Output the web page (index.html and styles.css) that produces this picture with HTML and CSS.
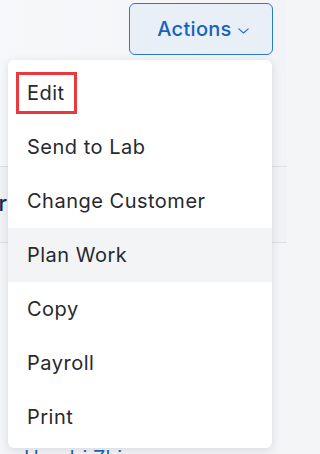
FILE: index.html
```html
<!DOCTYPE html>
<html lang="en">
<head>
<meta charset="utf-8">
<title>Actions menu</title>
<link rel="stylesheet" href="styles.css">
</head>
<body>
<div class="page">
  <header class="topbar">
    <button class="actions-btn" type="button">
      <span>Actions</span>
      <svg class="chev" width="11" height="6" viewBox="0 0 11 6" aria-hidden="true"><path d="M0.8 0.8 L5.5 5 L10.2 0.8" fill="none" stroke="#1f6fc5" stroke-width="1.1" stroke-linecap="round" stroke-linejoin="round"/></svg>
    </button>
  </header>
  <section class="band">
    <div class="title-clip"><h2 class="title">Customer</h2></div>
  </section>
  <section class="content">
    <a class="link" href="#">Hendri Zhi</a>
  </section>

  <ul class="menu">
    <li class="item"><span class="mark">Edit</span></li>
    <li class="item">Send to Lab</li>
    <li class="item">Change Customer</li>
    <li class="item hover">Plan Work</li>
    <li class="item">Copy</li>
    <li class="item">Payroll</li>
    <li class="item">Print</li>
  </ul>
</div>
</body>
</html>
```

FILE: styles.css
```css
* { box-sizing: border-box; }
html, body { margin: 0; padding: 0; }
body {
  font-family: Inter, "Noto Sans", "Liberation Sans", sans-serif;
  background: #f4f5f7;
  width: 287px;
  height: 454px;
  overflow: hidden;
}
.page {
  position: relative;
  width: 287px;
  height: 454px;
  overflow: hidden;
}
.topbar {
  height: 167px;
  display: flex;
  justify-content: flex-end;
  align-items: flex-start;
  padding: 3px 14px 0 0;
  background: linear-gradient(90deg, #f7f8fa 0%, #f1f3f6 100%);
  border-bottom: 1px solid #dcdfe4;
}
.actions-btn {
  width: 144px;
  height: 52px;
  display: flex;
  align-items: center;
  justify-content: center;
  gap: 6px;
  padding: 0 0 0 4px;
  border: 1px solid #2b7acb;
  border-radius: 6px;
  background: #e8eff7;
  color: #1663bd;
  font-family: Inter, "Noto Sans", "Liberation Sans", sans-serif;
  font-size: 20px;
  font-weight: 500;
  letter-spacing: 0.3px;
  cursor: pointer;
}
.chev { margin-top: 3px; }
.band {
  height: 76px;
  display: flex;
  align-items: center;
  background: #f1f2f4;
  border-bottom: 1px solid #dcdfe4;
}
.title-clip {
  width: 7px;
  overflow: hidden;
  display: flex;
  justify-content: flex-end;
}
.title {
  margin: 0 0 4px;
  white-space: nowrap;
  font-size: 22px;
  font-weight: 500;
  color: #16294a;
}
.content {
  padding: 205px 0 0 24px;
  background: #f4f5f7;
}
.link {
  color: #1a63b8;
  font-size: 20px;
  text-decoration: none;
  line-height: 1;
}
.menu {
  position: absolute;
  left: 8px;
  top: 60px;
  width: 264px;
  margin: 0;
  padding: 6px 0 4px;
  list-style: none;
  background: #ffffff;
  border-radius: 6px;
  box-shadow: 0 2px 10px rgba(20, 30, 50, 0.13);
}
.item {
  height: 54px;
  display: flex;
  align-items: center;
  padding-left: 19px;
  font-size: 20px;
  letter-spacing: 0.5px;
  color: #26292e;
  white-space: nowrap;
}
.item.hover { background: #f3f4f6; }
.mark {
  display: inline-block;
  margin-left: -11px;
  padding: 6px 9px 6px 8px;
  border: 3px solid #e9393e;
  line-height: 24px;
}
```
